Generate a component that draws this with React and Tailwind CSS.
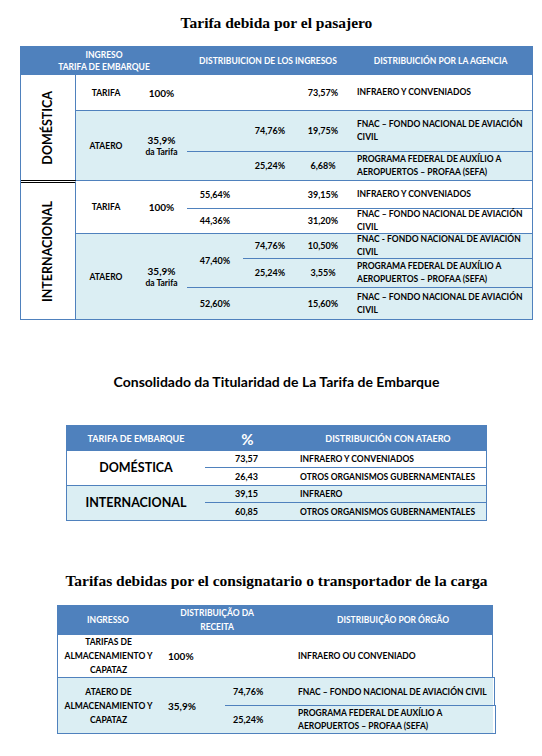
import React from "react";

const line = "border-[#4f81bd]";
const num = "text-[9px]";
const txt = "flex-1 pl-[8px] leading-[13px] whitespace-nowrap";

const Pass = () => (
  <div className={`ml-[20px] w-[513px] border ${line} text-[8.5px] font-bold leading-[12px]`}>
    <div className="flex h-[28px] bg-[#4f81bd] text-white">
      <div className="w-[166px] flex flex-col items-center justify-center">
        <span>INGRESO</span>
        <span>TARIFA DE EMBARQUE</span>
      </div>
      <div className="w-[162px] flex items-center justify-center">DISTRIBUICION DE LOS INGRESOS</div>
      <div className="flex-1 flex items-center justify-center">DISTRIBUICIÓN POR LA AGENCIA</div>
    </div>

    {/* domestica */}
    <div className="flex">
      <div className={`w-[55px] border-r ${line} flex items-center justify-center`}>
        <span className="[writing-mode:vertical-rl] rotate-180 text-[12.5px]">DOMÉSTICA</span>
      </div>
      <div className="flex-1 flex flex-col">
        <div className="flex h-[35px] items-center">
          <div className="w-[60px] text-center">TARIFA</div>
          <div className="w-[51px] text-center text-[10px]">100%</div>
          <div className="w-[110px]"></div>
          <div className={`w-[52px] text-center ${num}`}>73,57%</div>
          <div className={txt}>INFRAERO Y CONVENIADOS</div>
        </div>
        <div className={`flex bg-[#dbeef3] border-t ${line}`}>
          <div className="w-[60px] flex items-center justify-center">ATAERO</div>
          <div className="w-[51px] flex flex-col items-center justify-center">
            <span className="text-[10px]">35,9%</span>
            <span>da Tarifa</span>
          </div>
          <div className="flex-1 flex flex-col">
            <div className="flex h-[40px] items-center">
              <div className="w-[56px]"></div>
              <div className={`w-[54px] text-center ${num}`}>74,76%</div>
              <div className={`w-[52px] text-center ${num}`}>19,75%</div>
              <div className={txt}>FNAC – FONDO NACIONAL DE AVIACIÓN<br />CIVIL</div>
            </div>
            <div className={`flex h-[29px] items-center border-t ${line}`}>
              <div className="w-[56px]"></div>
              <div className={`w-[54px] text-center ${num}`}>25,24%</div>
              <div className={`w-[52px] text-center ${num}`}>6,68%</div>
              <div className={txt}>PROGRAMA FEDERAL DE AUXÍLIO A<br />AEROPUERTOS – PROFAA (SEFA)</div>
            </div>
          </div>
        </div>
      </div>
    </div>

    {/* internacional */}
    <div className="flex">
      <div className={`w-[55px] border-r ${line} border-t-[3px] border-t-black border-double flex items-center justify-center`}>
        <span className="[writing-mode:vertical-rl] rotate-180 text-[12.5px]">INTERNACIONAL</span>
      </div>
      <div className="flex-1 flex flex-col">
        <div className={`flex border-t ${line}`}>
          <div className="w-[60px] flex items-center justify-center">TARIFA</div>
          <div className="w-[51px] flex items-center justify-center text-[10px]">100%</div>
          <div className="flex-1 flex flex-col">
            <div className="flex h-[27px] items-center">
              <div className={`w-[56px] text-center ${num}`}>55,64%</div>
              <div className="w-[54px]"></div>
              <div className={`w-[52px] text-center ${num}`}>39,15%</div>
              <div className={txt}>INFRAERO Y CONVENIADOS</div>
            </div>
            <div className={`flex h-[25px] items-center border-t ${line}`}>
              <div className={`w-[56px] text-center ${num}`}>44,36%</div>
              <div className="w-[54px]"></div>
              <div className={`w-[52px] text-center ${num}`}>31,20%</div>
              <div className={txt}>FNAC – FONDO NACIONAL DE AVIACIÓN<br />CIVIL</div>
            </div>
          </div>
        </div>
        <div className={`flex bg-[#dbeef3] border-t ${line}`}>
          <div className="w-[60px] flex items-center justify-center">ATAERO</div>
          <div className="w-[51px] flex flex-col items-center justify-center">
            <span className="text-[10px]">35,9%</span>
            <span>da Tarifa</span>
          </div>
          <div className="flex-1 flex flex-col">
            <div className="flex">
              <div className={`w-[56px] flex items-center justify-center ${num}`}>47,40%</div>
              <div className="flex-1 flex flex-col">
                <div className="flex h-[24px] items-center">
                  <div className={`w-[54px] text-center ${num}`}>74,76%</div>
                  <div className={`w-[52px] text-center ${num}`}>10,50%</div>
                  <div className={txt}>FNAC - FONDO NACIONAL DE AVIACIÓN<br />CIVIL</div>
                </div>
                <div className={`flex h-[29px] items-center border-t ${line}`}>
                  <div className={`w-[54px] text-center ${num}`}>25,24%</div>
                  <div className={`w-[52px] text-center ${num}`}>3,55%</div>
                  <div className={txt}>PROGRAMA FEDERAL DE AUXÍLIO A<br />AEROPUERTOS – PROFAA (SEFA)</div>
                </div>
              </div>
            </div>
            <div className={`flex h-[32px] items-center border-t ${line}`}>
              <div className={`w-[56px] text-center ${num}`}>52,60%</div>
              <div className="w-[54px]"></div>
              <div className={`w-[52px] text-center ${num}`}>15,60%</div>
              <div className={txt}>FNAC – FONDO NACIONAL DE AVIACIÓN<br />CIVIL</div>
            </div>
          </div>
        </div>
      </div>
    </div>
  </div>
);

const Consolidado = () => (
  <div className={`ml-[66px] w-[421px] border ${line} text-[8.5px] font-bold leading-[12px]`}>
    <div className="flex h-[25px] items-center bg-[#4f81bd] text-white text-[9px]">
      <div className="w-[138px] text-center">TARIFA DE EMBARQUE</div>
      <div className="w-[85px] text-center text-[15px]">%</div>
      <div className="flex-1 text-center">DISTRIBUICIÓN CON ATAERO</div>
    </div>
    <div className="flex">
      <div className="w-[138px] flex items-center justify-center text-[12.5px]">DOMÉSTICA</div>
      <div className="flex-1 flex flex-col">
        <div className="flex h-[16px] items-center">
          <div className={`w-[85px] pl-[30px] ${num}`}>73,57</div>
          <div className="flex-1 pl-[10px]">INFRAERO Y CONVENIADOS</div>
        </div>
        <div className={`flex h-[18px] items-center border-t ${line}`}>
          <div className={`w-[85px] pl-[30px] ${num}`}>26,43</div>
          <div className="flex-1 pl-[10px]">OTROS ORGANISMOS GUBERNAMENTALES</div>
        </div>
      </div>
    </div>
    <div className={`flex bg-[#dbeef3] border-t ${line}`}>
      <div className="w-[138px] flex items-center justify-center text-[12.5px]">INTERNACIONAL</div>
      <div className="flex-1 flex flex-col">
        <div className="flex h-[16px] items-center">
          <div className={`w-[85px] pl-[30px] ${num}`}>39,15</div>
          <div className="flex-1 pl-[10px]">INFRAERO</div>
        </div>
        <div className={`flex h-[18px] items-center border-t ${line}`}>
          <div className={`w-[85px] pl-[30px] ${num}`}>60,85</div>
          <div className="flex-1 pl-[10px]">OTROS ORGANISMOS GUBERNAMENTALES</div>
        </div>
      </div>
    </div>
  </div>
);

const Carga = () => (
  <div className="ml-[57px] w-[436px] text-[8.5px] font-bold leading-[14px]">
    <div className="flex h-[30px] items-center bg-[#4f81bd] text-white">
      <div className="w-[102px] text-center">INGRESSO</div>
      <div className="w-[116px] text-center">DISTRIBUIÇÃO DA<br />RECEITA</div>
      <div className="flex-1 pl-[18px] text-center">DISTRIBUIÇÃO POR ÓRGÃO</div>
    </div>
    <div className={`flex h-[42px] items-center border-x ${line}`}>
      <div className="w-[101px] text-center">TARIFAS DE<br />ALMACENAMIENTO Y<br />CAPATAZ</div>
      <div className="w-[66px] pl-[9px] text-[10px]">100%</div>
      <div className="w-[65px]"></div>
      <div className="flex-1 pl-[8px]">INFRAERO OU CONVENIADO</div>
    </div>
    <div className="flex bg-[#dbeef3]">
      <div className={`w-[168px] flex items-center border-l border-y ${line}`}>
        <div className="w-[101px] text-center">ATAERO DE<br />ALMACENAMIENTO Y<br />CAPATAZ</div>
        <div className="flex-1 pl-[9px] text-[10px]">35,9%</div>
      </div>
      <div className="flex-1 flex flex-col">
        <div className={`flex h-[28px] items-center border-t border-r ${line} -mr-[2px]`}>
          <div className={`w-[65px] pl-[8px] ${num}`}>74,76%</div>
          <div className="flex-1 pl-[8px] whitespace-nowrap">FNAC – FONDO NACIONAL DE AVIACIÓN CIVIL</div>
        </div>
        <div className={`flex h-[29px] items-center border-y border-r ${line} -mr-[3px] leading-[13px]`}>
          <div className={`w-[65px] pl-[8px] ${num}`}>25,24%</div>
          <div className="flex-1 pl-[8px] whitespace-nowrap">PROGRAMA FEDERAL DE AUXÍLIO A<br />AEROPUERTOS – PROFAA (SEFA)</div>
        </div>
      </div>
    </div>
  </div>
);

export default function App() {
  return (
    <div className="w-[542px] min-h-[756px] bg-white text-black font-['Lato',sans-serif] pt-[14px]">
      <h1 className="ml-[20px] w-[513px] text-center font-['Liberation_Serif',serif] font-bold text-[15.5px] leading-[18px]">
        Tarifa debida por el pasajero
      </h1>
      <div className="mt-[14px]">
        <Pass />
      </div>
      <h2 className="mt-[53px] ml-[20px] w-[513px] text-center font-bold text-[14px] leading-[18px]">
        Consolidado da Titularidad de La Tarifa de Embarque
      </h2>
      <div className="mt-[34px]">
        <Consolidado />
      </div>
      <h2 className="mt-[51px] ml-[20px] w-[513px] text-center font-['Liberation_Serif',serif] font-bold text-[15.5px] leading-[18px]">
        Tarifas debidas por el consignatario o transportador de la carga
      </h2>
      <div className="mt-[15px]">
        <Carga />
      </div>
    </div>
  );
}
